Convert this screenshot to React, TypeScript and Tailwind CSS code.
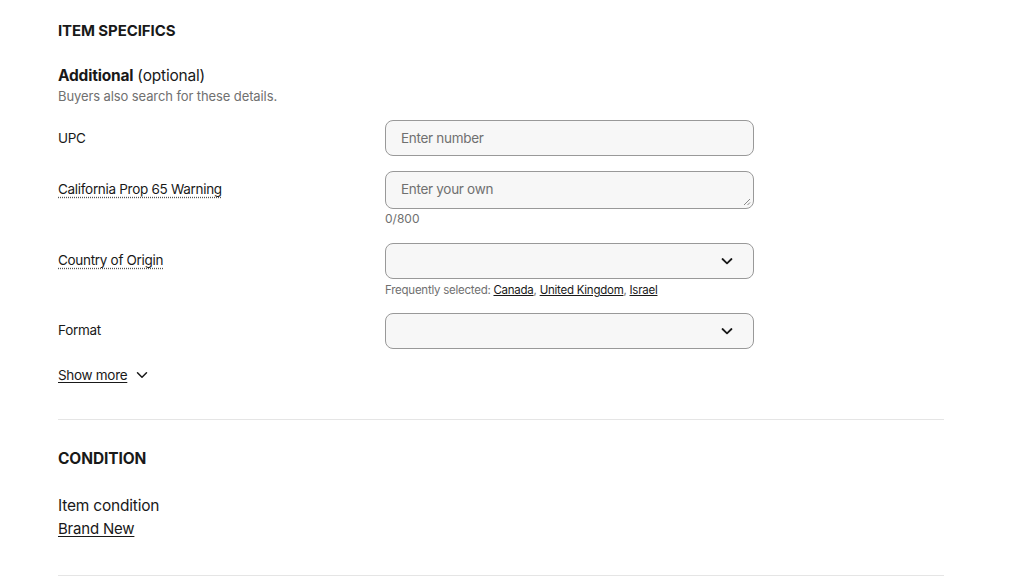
import { ChevronDown } from 'lucide-react';

const font = { fontFamily: 'Inter, "Noto Sans", sans-serif' };

function Chevron() {
  return (
    <svg width="14" height="14" viewBox="0 0 14 14" fill="none" className="text-[#191919]">
      <path d="M2.5 5 L7 9.3 L11.5 5" stroke="currentColor" strokeWidth="1.8" strokeLinecap="round" strokeLinejoin="round" />
    </svg>
  );
}

function SelectBox() {
  return (
    <div className="flex h-[36px] w-[369px] items-center justify-end rounded-lg border border-[#999] bg-[#f7f7f7] pr-[19px]">
      <Chevron />
    </div>
  );
}

function DottedLabel({ children }: { children: React.ReactNode }) {
  return (
    <span className="underline decoration-dotted decoration-[#555] underline-offset-[3px]">{children}</span>
  );
}

export default function App() {
  return (
    <div className="min-h-[579px] w-full bg-white text-[#191919]" style={font}>
      <div className="ml-[58px] w-[886px]">
        <section className="pt-[21px]">
          <h2 className="text-[15px] font-bold leading-5 tracking-[-0.1px]">ITEM SPECIFICS</h2>

          <div className="mt-[25px]">
            <p className="text-[15.5px] leading-5 tracking-[-0.2px]">
              <span className="font-bold">Additional</span> (optional)
            </p>
            <p className="text-[13px] leading-[20px] tracking-[-0.1px] text-[#707070]">Buyers also search for these details.</p>
          </div>

          <div className="mt-[14px] flex items-start">
            <div className="w-[327px] pt-[9px] text-[13.5px] leading-[18px] tracking-[-0.3px]">UPC</div>
            <div className="flex h-[36px] w-[369px] items-center rounded-lg border border-[#999] bg-[#f7f7f7] px-[15px] text-[13.5px] tracking-[-0.3px] text-[#707070]">
              Enter number
            </div>
          </div>

          <div className="mt-[15px] flex items-start">
            <div className="w-[327px] pt-[9px] text-[13.5px] leading-[18px] tracking-[-0.3px]">
              <DottedLabel>California Prop 65 Warning</DottedLabel>
            </div>
            <div>
              <div className="relative h-[38px] w-[369px] rounded-lg border border-[#999] bg-[#f7f7f7] px-[15px] pt-[8px] text-[13.5px] leading-[18px] tracking-[-0.3px] text-[#707070]">
                Enter your own
                <svg className="absolute bottom-[2px] right-[2px]" width="8" height="8" viewBox="0 0 8 8">
                  <path d="M7 1 L1 7 M7 4.5 L4.5 7" stroke="#888" strokeWidth="1" />
                </svg>
              </div>
              <p className="mt-[3px] text-[12px] leading-[14px] text-[#707070]">0/800</p>
            </div>
          </div>

          <div className="mt-[17px] flex items-start">
            <div className="w-[327px] pt-[8px] text-[13.5px] leading-[18px] tracking-[-0.3px]">
              <DottedLabel>Country of Origin</DottedLabel>
            </div>
            <div>
              <SelectBox />
              <p className="mt-[4px] text-[11.5px] leading-[14px] tracking-[-0.25px] text-[#707070]">
                Frequently selected:{' '}
                <span className="text-[#191919] underline">Canada</span>,{' '}
                <span className="text-[#191919] underline">United Kingdom</span>,{' '}
                <span className="text-[#191919] underline">Israel</span>
              </p>
            </div>
          </div>

          <div className="mt-[16px] flex items-start">
            <div className="w-[327px] pt-[8px] text-[13.5px] leading-[18px] tracking-[-0.3px]">Format</div>
            <SelectBox />
          </div>

          <button className="mt-[17px] flex items-center gap-[6px] text-[13.5px] leading-[18px] tracking-[-0.3px]">
            <span className="underline underline-offset-2">Show more</span>
            <ChevronDown size={18} strokeWidth={2} />
          </button>
        </section>

        <hr className="mt-[35px] border-t border-[#e5e5e5]" />

        <section className="pt-[29px]">
          <h2 className="text-[15.5px] font-bold leading-5 tracking-[-0.1px]">CONDITION</h2>
          <div className="mt-[25px] leading-[23px] tracking-[-0.2px]">
            <p className="text-[15.5px]">Item condition</p>
            <p className="text-[15px] underline underline-offset-2">Brand New</p>
          </div>
        </section>

        <hr className="mt-[35px] border-t border-[#e5e5e5]" />
      </div>
    </div>
  );
}
